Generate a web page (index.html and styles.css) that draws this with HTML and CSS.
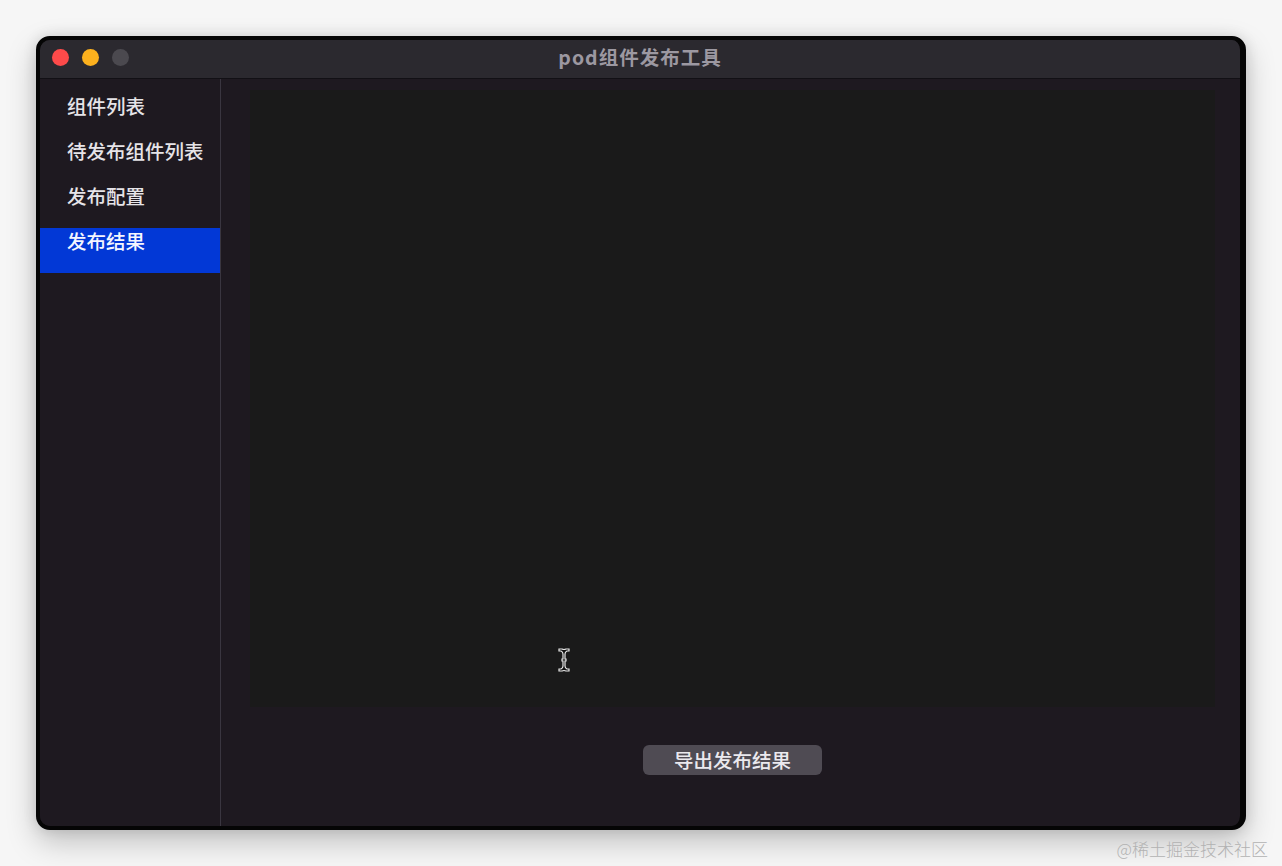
FILE: index.html
```html
<!DOCTYPE html>
<html lang="zh">
<head>
<meta charset="utf-8">
<title>pod组件发布工具</title>
<link rel="stylesheet" href="styles.css">
</head>
<body>
<div class="stage">
  <div class="window">
    <div class="titlebar">
      <div class="lights">
        <span class="light red"></span>
        <span class="light yellow"></span>
        <span class="light grey"></span>
      </div>
      <div class="title">pod组件发布工具</div>
    </div>
    <div class="main">
      <nav class="sidebar">
        <div class="item">组件列表</div>
        <div class="item">待发布组件列表</div>
        <div class="item">发布配置</div>
        <div class="item active">发布结果</div>
      </nav>
      <section class="content">
        <div class="textarea"></div>
        <div class="actions">
          <button class="btn">导出发布结果</button>
        </div>
      </section>
    </div>
  </div>
  <svg class="cursor" width="14" height="26" viewBox="0 0 14 26">
    <path d="M2 2 H5 Q7 3 9 2 H12 V4 H10 Q8 5 8 7 V12 H9 V14 H8 V19 Q8 21 10 22 H12 V24 H9 Q7 23 5 24 H2 V22 H4 Q6 21 6 19 V14 H5 V12 H6 V7 Q6 5 4 4 H2 Z" fill="#111" stroke="#e8e8e8" stroke-width="1.2"/>
  </svg>
  <div class="watermark">@稀土掘金技术社区</div>
</div>
</body>
</html>
```

FILE: styles.css
```css
* { box-sizing: border-box; }
html, body { margin: 0; padding: 0; }
body {
  background: #f6f6f6;
  font-family: "Noto Sans CJK SC", "Noto Sans", sans-serif;
  width: 1282px;
  height: 866px;
  overflow: hidden;
}
.stage {
  position: relative;
  width: 1282px;
  height: 866px;
  padding: 36px 36px 0 36px;
}
.window {
  width: 1210px;
  height: 794px;
  background: #1e1920;
  border: 4px solid #050505;
  border-right-width: 6px;
  border-radius: 14px;
  box-shadow: 0 12px 30px rgba(0,0,0,0.22), 0 0 14px rgba(0,0,0,0.12);
  display: flex;
  flex-direction: column;
  overflow: hidden;
}
.titlebar {
  position: relative;
  height: 39px;
  flex: none;
  background: #2b292f;
  border-bottom: 1px solid #121015;
  display: flex;
  align-items: center;
  justify-content: center;
  padding-bottom: 5px;
}
.lights {
  position: absolute;
  left: 12px;
  top: 9px;
  display: flex;
  gap: 13px;
}
.light {
  width: 17px;
  height: 17px;
  border-radius: 50%;
  display: block;
}
.red { background: #fd4a4a; }
.yellow { background: #fcb11e; }
.grey { background: #4b494f; }
.title {
  color: #9c98a1;
  font-size: 19.5px;
  font-weight: 700;
  letter-spacing: 1px;
  line-height: 24px;
}
.main {
  flex: 1;
  display: flex;
}
.sidebar {
  width: 181px;
  flex: none;
  border-right: 1px solid #3a3640;
  padding-top: 12px;
  background: #1e1920;
}
.item {
  height: 45px;
  padding: 2px 0 0 27px;
  color: #e6e4e8;
  font-size: 19.5px;
  font-weight: 500;
  line-height: 26px;
}
.item.active {
  background: #0238d6;
  color: #f4f6ff;
  margin-top: 2px;
  padding-top: 0;
}
.content {
  flex: 1;
  display: flex;
  flex-direction: column;
  padding: 11px 25px 0 29px;
}
.textarea {
  height: 617px;
  background: #1a1a1a;
}
.actions {
  display: flex;
  justify-content: center;
  padding-top: 38px;
}
.btn {
  width: 179px;
  height: 30px;
  border: none;
  border-radius: 6px;
  background: #4f4b53;
  color: #ebe9ee;
  font-family: "Noto Sans CJK SC", "Noto Sans", sans-serif;
  font-size: 19.5px;
  font-weight: 500;
  line-height: 30px;
  padding: 0;
}
.cursor {
  position: absolute;
  left: 557px;
  top: 647px;
}
.watermark {
  position: absolute;
  right: 14px;
  top: 838px;
  color: #b2b2b2;
  font-size: 17px;
  font-weight: 300;
  line-height: 22px;
}
```
